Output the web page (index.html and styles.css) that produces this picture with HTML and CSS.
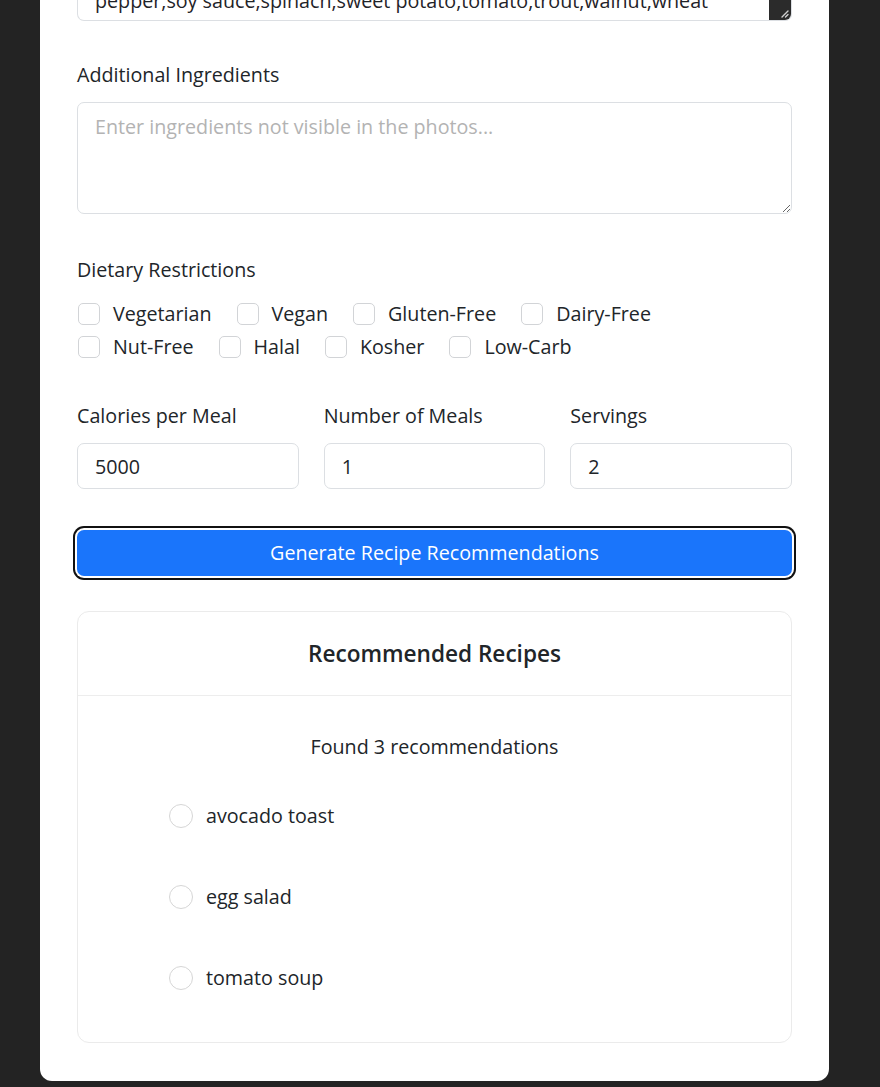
FILE: index.html
```html
<!DOCTYPE html>
<html lang="en">
<head>
<meta charset="utf-8">
<title>Recipe Recommendations</title>
<link rel="stylesheet" href="styles.css">
</head>
<body>
<main class="page">
  <section class="panel">
    <div class="ingredients-box">
      <div class="ingredients-text"><span class="ingredients-line">pepper,soy sauce,spinach,sweet potato,tomato,trout,walnut,wheat</span></div>
      <div class="scrollbar">
        <svg class="grip" width="10" height="10" viewBox="0 0 10 10"><path d="M9 3 L3 9 M9 6.5 L6.5 9" stroke="#cfcfcf" stroke-width="1.4" stroke-linecap="round"/></svg>
      </div>
    </div>

    <div class="field gap-first">
      <label class="form-label" for="extra">Additional Ingredients</label>
      <textarea id="extra" class="form-control textarea" rows="3" placeholder="Enter ingredients not visible in the photos..."></textarea>
    </div>

    <div class="field gap-diet">
      <div class="form-label">Dietary Restrictions</div>
      <div class="checks">
        <label class="check"><span class="box"></span>Vegetarian</label>
        <label class="check"><span class="box"></span>Vegan</label>
        <label class="check"><span class="box"></span>Gluten-Free</label>
        <label class="check"><span class="box"></span>Dairy-Free</label>
        <label class="check"><span class="box"></span>Nut-Free</label>
        <label class="check"><span class="box"></span>Halal</label>
        <label class="check"><span class="box"></span>Kosher</label>
        <label class="check"><span class="box"></span>Low-Carb</label>
      </div>
    </div>

    <div class="grid3">
      <div class="field">
        <label class="form-label" for="cal">Calories per Meal</label>
        <input id="cal" class="form-control input" type="text" value="5000">
      </div>
      <div class="field">
        <label class="form-label" for="meals">Number of Meals</label>
        <input id="meals" class="form-control input" type="text" value="1">
      </div>
      <div class="field">
        <label class="form-label" for="serv">Servings</label>
        <input id="serv" class="form-control input" type="text" value="2">
      </div>
    </div>

    <button class="btn-primary" type="button">Generate Recipe Recommendations</button>

    <div class="results">
      <div class="results-header">Recommended Recipes</div>
      <div class="results-body">
        <p class="found">Found 3 recommendations</p>
        <ul class="recipes">
          <li class="recipe"><span class="radio"></span>avocado toast</li>
          <li class="recipe"><span class="radio"></span>egg salad</li>
          <li class="recipe"><span class="radio"></span>tomato soup</li>
        </ul>
      </div>
    </div>
  </section>
</main>
</body>
</html>
```

FILE: styles.css
```css
html, body {
  margin: 0;
  padding: 0;
  background: #232323;
  height: 100%;
  overflow: hidden;
}

body {
  font-family: "Open Sans", "Noto Sans", sans-serif;
  font-size: 19.7px;
  line-height: 30px;
  color: #212529;
}

.page {
  padding-left: 40px;
}

.panel {
  width: 789px;
  box-sizing: border-box;
  background: #ffffff;
  border-radius: 0 0 12px 12px;
  padding: 0 37px 38px;
  display: flex;
  flex-direction: column;
}

.ingredients-box {
  height: 21px;
  box-sizing: border-box;
  border: 1px solid #dcdfe3;
  border-top: none;
  border-radius: 0 0 7px 7px;
  display: flex;
  overflow: hidden;
}

.ingredients-text {
  flex: 1;
  display: flex;
  align-items: flex-end;
  padding: 0 0 4px 17px;
  overflow: hidden;
}

.ingredients-line {
  white-space: nowrap;
  line-height: 30px;
  color: #1f2328;
}

.scrollbar {
  width: 22px;
  background: #2b2b2b;
  display: flex;
  align-items: flex-end;
  justify-content: flex-end;
}

.grip {
  display: block;
  margin: 0 2px 2px 0;
}

.field {
  display: flex;
  flex-direction: column;
}

.gap-first {
  margin-top: 39px;
}

.gap-diet {
  margin-top: 41px;
}

.form-label {
  display: block;
  line-height: 30px;
  margin-bottom: 12px;
}

.form-control {
  font-family: inherit;
  font-size: 19.7px;
  color: #212529;
  border: 1px solid #dcdfe3;
  border-radius: 7px;
  background: #fff;
  box-sizing: border-box;
  width: 100%;
  outline: none;
  margin: 0;
}

.textarea {
  height: 112px;
  padding: 9px 17px;
  line-height: 30px;
  resize: vertical;
  display: block;
}

.textarea::placeholder {
  color: #b3b3b3;
}

.checks {
  display: flex;
  flex-wrap: wrap;
  column-gap: 24px;
  row-gap: 3px;
  margin-top: 2px;
  max-width: 680px;
}

.check {
  display: flex;
  align-items: center;
  gap: 13px;
  line-height: 30px;
}

.box {
  width: 22px;
  height: 22px;
  box-sizing: border-box;
  border: 1px solid #d2d4d7;
  border-radius: 5px;
  background: #fff;
  margin-left: 1px;
}

.grid3 {
  display: grid;
  grid-template-columns: repeat(3, 1fr);
  column-gap: 25px;
  margin-top: 39px;
}

.input {
  height: 46px;
  padding: 0 17px;
  line-height: 44px;
}

.btn-primary {
  margin-top: 41px;
  height: 46px;
  width: 100%;
  border: none;
  border-radius: 7px;
  background: #1a75fb;
  color: #ffffff;
  font-family: inherit;
  font-size: 19.7px;
  line-height: 30px;
  padding: 0;
  box-shadow: 0 0 0 2px #ffffff, 0 0 0 4px #111111;
  cursor: pointer;
}

.results {
  margin-top: 35px;
  border: 1px solid #ebebeb;
  border-radius: 12px;
}

.results-header {
  text-align: center;
  font-size: 22.6px;
  font-weight: 600;
  line-height: 30px;
  padding: 27px 0 26px;
  border-bottom: 1px solid #ededed;
}

.results-body {
  padding: 36px 0 49px;
}

.found {
  margin: 0;
  text-align: center;
  line-height: 30px;
}

.recipes {
  list-style: none;
  margin: 39px 0 0;
  padding: 0 0 0 91px;
  display: flex;
  flex-direction: column;
  gap: 51px;
}

.recipe {
  display: flex;
  align-items: center;
  gap: 13px;
  line-height: 30px;
}

.radio {
  width: 24px;
  height: 24px;
  box-sizing: border-box;
  border: 1px solid #d6d6d6;
  border-radius: 50%;
  background: #fff;
}
```
